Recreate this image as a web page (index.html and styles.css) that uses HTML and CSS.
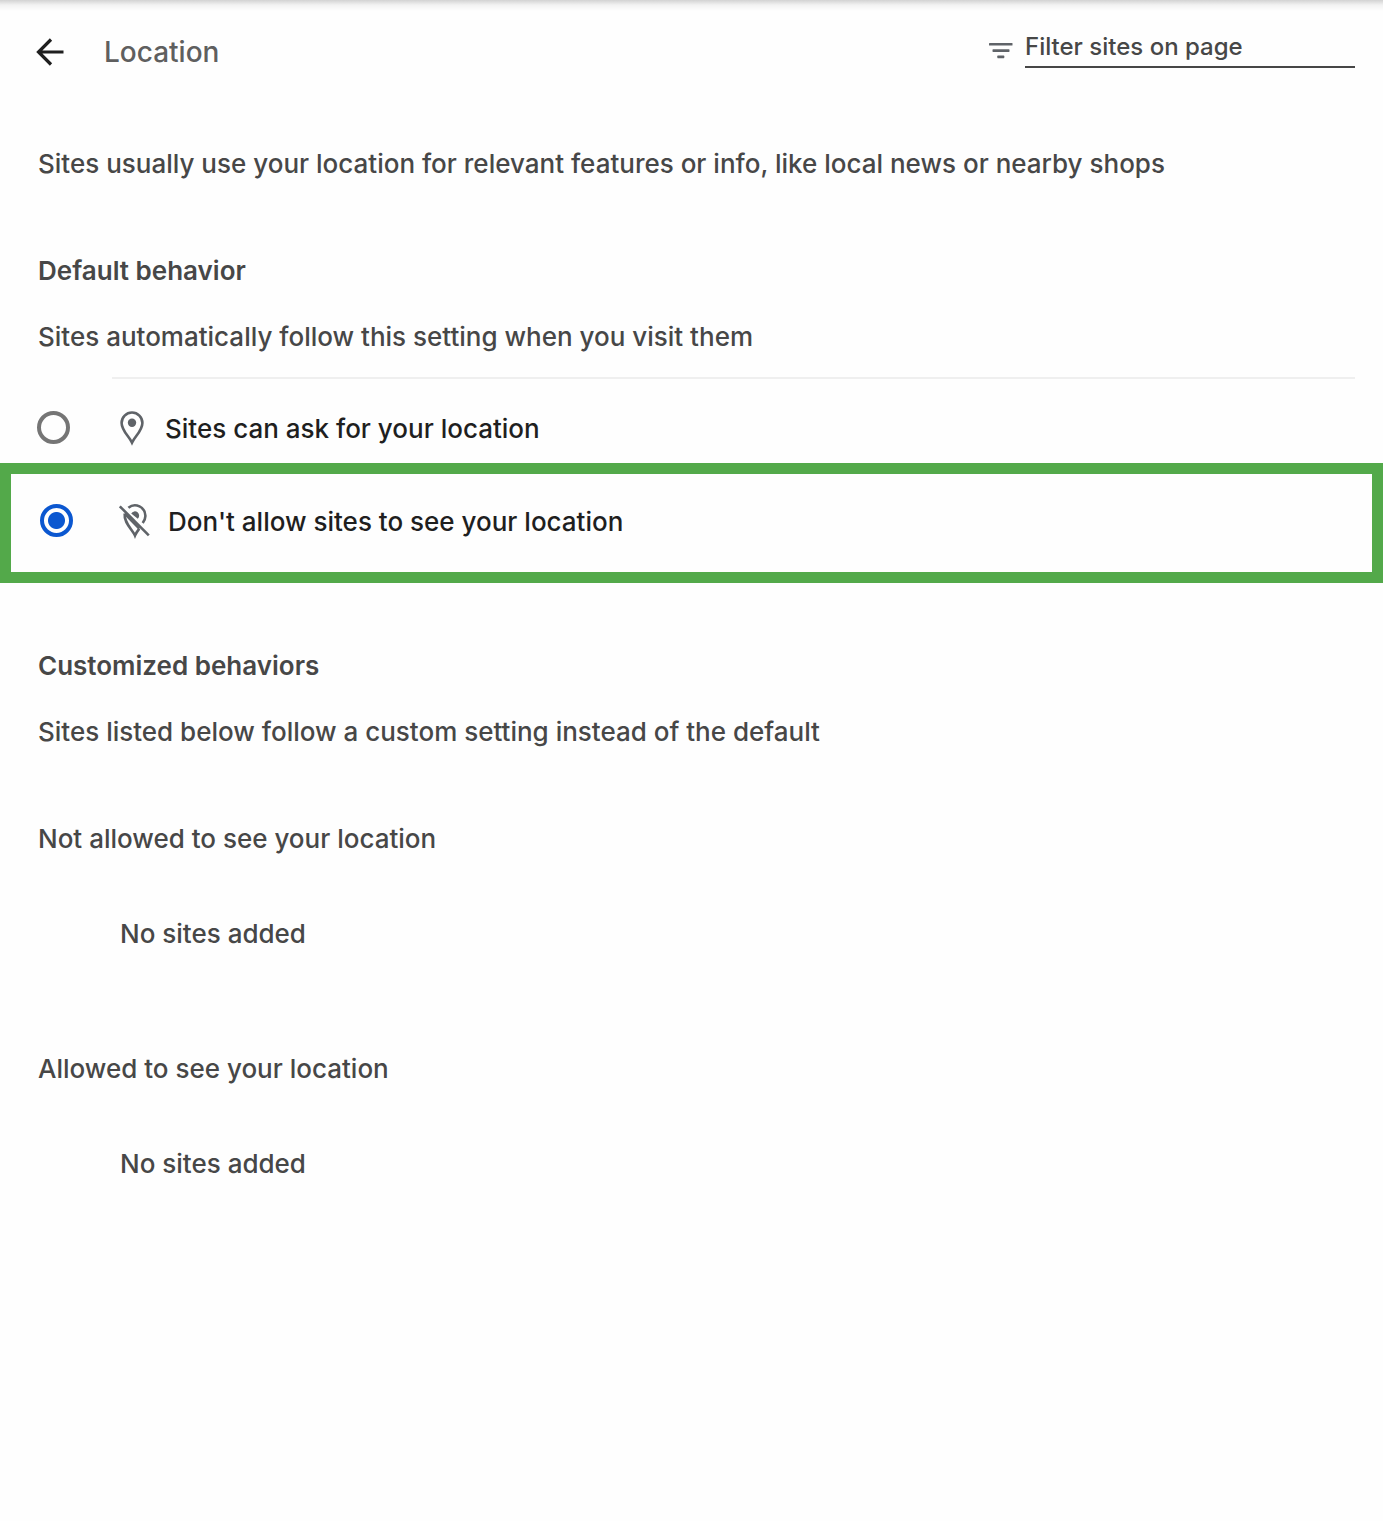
FILE: index.html
```html
<!DOCTYPE html>
<html lang="en">
<head>
    <meta charset="UTF-8">
    <meta name="viewport" content="width=device-width, initial-scale=1.0">
    <title>Location</title>
    <link rel="stylesheet" href="styles.css">
</head>
<body>

<header class="page-header">
    <button class="back-button" type="button" aria-label="Back">
        <svg width="30" height="30" viewBox="0 0 30 30" fill="none" stroke="#1f1f1f" stroke-width="3.2">
            <path d="M29.5 15H4.5M17 2.5L4.5 15 17 27.5"/>
        </svg>
    </button>
    <h1>Location</h1>
    <div class="filter">
        <label for="filter-sites" aria-label="Filter sites on page">
            <svg width="24" height="18" viewBox="0 0 24 18" fill="#5f6368">
                <rect x="0" y="1" width="23.5" height="2.6" rx="0.6"/>
                <rect x="3.5" y="7.3" width="17" height="2.6" rx="0.6"/>
                <rect x="8.3" y="13.6" width="7" height="2.6" rx="0.6"/>
            </svg>
        </label>
        <input type="text" id="filter-sites" placeholder="Filter sites on page">
    </div>
</header>

<main>
    <p class="intro">Sites usually use your location for relevant features or info, like local news or nearby shops</p>

    <section class="group">
        <h2>Default behavior</h2>
        <p>Sites automatically follow this setting when you visit them</p>
    </section>

    <div class="options">
        <div class="option">
            <input type="radio" name="location" id="ask">
            <label for="ask">
                <svg width="42" height="42" viewBox="0 0 42 42">
                    <path d="M21 36.6C18.2 30.5 10.6 24.5 10.6 16.9a10.4 10.4 0 0 1 20.8 0C31.4 24.5 23.8 30.5 21 36.6z" fill="none" stroke="#5f6368" stroke-width="2.6"/>
                    <circle cx="21" cy="16.7" r="4.2" fill="#5f6368"/>
                </svg>
                <span>Sites can ask for your location</span>
            </label>
        </div>
        <div class="option selected">
            <input type="radio" name="location" id="block" checked>
            <label for="block">
                <svg width="42" height="42" viewBox="0 0 42 42" fill="none" stroke="#5f6368" stroke-width="2.6">
                    <path d="M14.4 8.8A10.4 10.4 0 0 1 31.4 16.9c0 2.4-.9 4.6-2.7 7.1"/>
                    <path d="M10.7 14.6C9.7 24 18.4 30.4 21 36.6c.9-2.1 2.3-4.4 4.3-7"/>
                    <path d="M10.7 14.6L25.3 29.6"/>
                    <path d="M17.2 14.4a4.3 4.3 0 1 1 6.6 5.4z" fill="#5f6368" stroke="none"/>
                    <path d="M5.8 7.3L34.8 36.3"/>
                </svg>
                <span>Don't allow sites to see your location</span>
            </label>
        </div>
    </div>

    <section class="group">
        <h2>Customized behaviors</h2>
        <p>Sites listed below follow a custom setting instead of the default</p>
    </section>

    <section class="site-list">
        <h3>Not allowed to see your location</h3>
        <p>No sites added</p>
    </section>

    <section class="site-list">
        <h3>Allowed to see your location</h3>
        <p>No sites added</p>
    </section>
</main>

</body>
</html>
```
FILE: styles.css
```css
* {
    box-sizing: border-box;
}
body {
    margin: 0;
    background: #fefefe linear-gradient(#d2d2d2, #f2f2f2 5px, #fefefe 11px) no-repeat top / 100% 11px;
    color: #474747;
    font-family: Inter, "Liberation Sans", sans-serif;
    font-size: 26px;
    font-weight: 450;
    line-height: 40px;
}
h1, h2, h3, p {
    margin: 0;
    font-size: inherit;
}
.page-header {
    display: flex;
    align-items: center;
    padding: 28px 28px 28px 34px;
}
.page-header h1 {
    margin-left: 40px;
    padding-top: 4px;
    color: #5f5f5f;
    font-size: 28px;
    font-weight: 500;
}
.back-button {
    display: flex;
    padding: 3px 0 0;
    border: none;
    background: none;
    cursor: pointer;
}
.filter {
    display: flex;
    align-items: center;
    gap: 12px;
    width: 366px;
    margin: 0 0 4px auto;
}
.filter label {
    display: flex;
    padding-top: 6px;
}
.filter input {
    flex: 1;
    min-width: 0;
    height: 40px;
    padding: 0;
    border: none;
    border-bottom: 2px solid #474747;
    background: none;
    color: #474747;
    font: inherit;
    font-size: 24px;
    outline: none;
}
.filter input::placeholder {
    color: #474747;
    opacity: 1;
}
.intro {
    padding: 44px 38px 4px;
}
.group {
    padding: 63px 38px 20px;
}
.group h2 {
    margin-bottom: 26px;
    font-weight: 600;
}
.options::before {
    content: "";
    display: block;
    height: 2px;
    margin: 0 28px 0 112px;
    background: #efefef;
}
.option {
    display: flex;
    align-items: center;
    gap: 41px;
    padding: 12px 28px 0 37px;
    min-height: 84px;
    color: #1f1f1f;
}
.option.selected {
    min-height: 120px;
    padding: 0 17px 6px 29px;
    border: 11px solid #53a94a;
}
.option input {
    appearance: none;
    width: 33px;
    height: 33px;
    margin: 0;
    border: 4px solid #757575;
    border-radius: 50%;
}
.option input:checked {
    border-color: #0b57d0;
    background: radial-gradient(circle, #0b57d0 8px, transparent 9px);
}
.option label {
    display: flex;
    flex: 1;
    align-items: center;
    gap: 12px;
}
.option span {
    padding-top: 4px;
}
.site-list {
    padding: 47px 38px 48px;
}
.site-list h3 {
    margin-bottom: 55px;
    font-weight: inherit;
}
.site-list p {
    padding-left: 82px;
}
```
